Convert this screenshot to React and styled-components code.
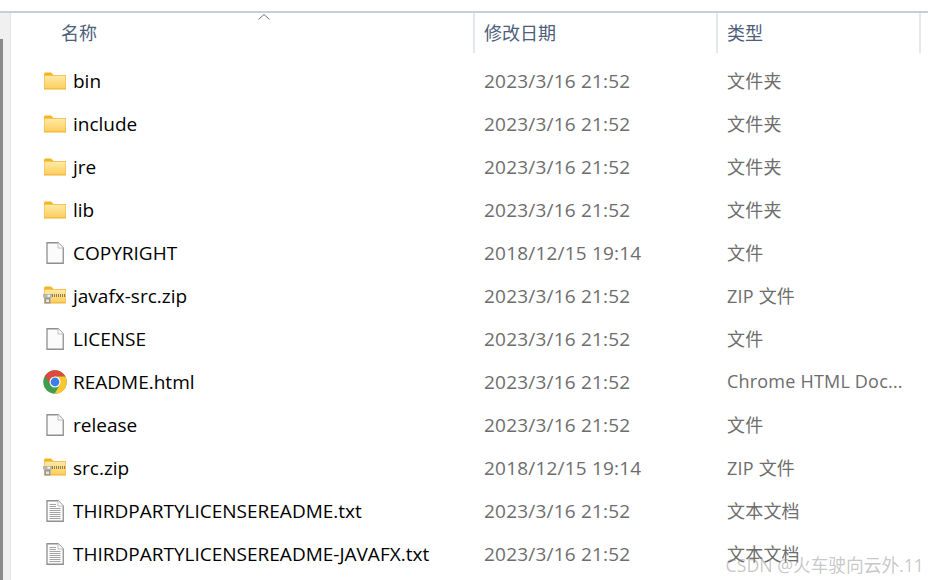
import React from "react";
import styled, { createGlobalStyle } from "styled-components";

const Global = createGlobalStyle`
  html, body {
    margin: 0;
    padding: 0;
    background: #fff;
    overflow: hidden;
  }
  body {
    font-family: "Open Sans", "Noto Sans CJK SC", sans-serif;
  }
`;

const Page = styled.div`
  position: relative;
  width: 928px;
  height: 580px;
  padding-top: 11px;
  box-sizing: border-box;
  overflow: hidden;
`;

const Frame = styled.div`
  display: flex;
  height: 569px;
  border-top: 2px solid #c4d0d9;
  box-sizing: border-box;
`;

const Side = styled.div`
  width: 10px;
  background: #f0f0f0;
  border-right: 1px solid #e4e4e4;
  margin-right: 2px;
`;

const SideThumb = styled.div`
  width: 3px;
  height: 100%;
  margin-top: 26px;
  background: #8a8a8a;
`;

const Main = styled.div`
  flex: 1;
  min-width: 0;
`;

const Head = styled.div`
  position: relative;
  display: grid;
  grid-template-columns: 462px 243px 203px;
  height: 39px;
`;

const HeadCell = styled.div`
  padding-left: ${(p) => p.$pad}px;
  border-right: 2px solid #e5e8eb;
  box-sizing: border-box;
  font-size: 18px;
  line-height: 40px;
  color: #4c607a;
`;

const SortCaret = styled.svg`
  position: absolute;
  left: 245px;
  top: 1px;
`;

const Rows = styled.div`
  padding-top: 7px;
`;

const Row = styled.div`
  display: grid;
  grid-template-columns: 462px 243px 203px;
  height: 43px;
  align-items: center;
`;

const NameCell = styled.div`
  display: flex;
  align-items: center;
  padding-left: 30px;
  font-size: 19px;
  color: #000;
  white-space: nowrap;
`;

const IconBox = styled.span`
  display: flex;
  justify-content: center;
  width: 24px;
  margin-right: 6px;
  flex: none;
`;

const DateCell = styled.div`
  padding-left: 9px;
  font-size: 19px;
  letter-spacing: 0.2px;
  color: #6d6d6d;
  white-space: nowrap;
`;

const TypeCell = styled.div`
  padding: 0 0 2px 9px;
  font-size: 18px;
  letter-spacing: 0.2px;
  color: #6d6d6d;
  white-space: nowrap;
`;

const Watermark = styled.div`
  position: absolute;
  right: 4px;
  bottom: 3px;
  font-size: 17.7px;
  color: rgba(130, 130, 130, 0.45);
  white-space: nowrap;
`;

function FolderBody({ id, x }) {
  return (
    <>
      <defs>
        <linearGradient id={id} x1="0" y1="0" x2="0" y2="1">
          <stop offset="0" stopColor="#ffeaa6" />
          <stop offset="1" stopColor="#fdcf5f" />
        </linearGradient>
      </defs>
      <path d={`M${x} 2 Q${x} .5 ${x + 1.5} .5 H${x + 7} L${x + 9.5} 3 H${x} Z`} fill="#f7b518" />
      <rect x={x} y="3" width="22" height="14.5" fill="#f1b338" />
      <rect x={x + 0.5} y="3.7" width="21" height="12.6" fill={`url(#${id})`} />
    </>
  );
}

function FolderIcon({ id }) {
  return (
    <svg width="22" height="18" viewBox="0 0 22 18">
      <FolderBody id={id} x={0} />
    </svg>
  );
}

function ZipIcon({ id }) {
  return (
    <svg width="24" height="20" viewBox="0 0 24 20">
      <FolderBody id={id} x={1} />
      <path d="M9 9.5 H23" stroke="#8d7d50" strokeWidth="3" strokeDasharray="1 1" />
      <rect x="0" y="8" width="9" height="3.5" fill="#b4b4b4" />
      <rect x="4.5" y="8.8" width="2.5" height="2" fill="#f4f4f4" />
      <rect x="1.5" y="11.5" width="6" height="6" fill="#989898" />
      <rect x="3" y="13.5" width="3" height="2.5" fill="#e6e6e6" />
    </svg>
  );
}

function FileIcon() {
  return (
    <svg width="18" height="22" viewBox="0 0 18 22">
      <path d="M1 .75 H12 L17.25 6 V21.25 H1 Z" fill="#fbfbfb" stroke="#8f8f8f" strokeWidth="1.3" />
      <path d="M12 .75 V6 H17.25" fill="#fff" stroke="#bdbdbd" strokeWidth="1" />
    </svg>
  );
}

function TextIcon() {
  return (
    <svg width="18" height="22" viewBox="0 0 18 22">
      <path d="M1 .75 H12 L17.25 6 V21.25 H1 Z" fill="#fbfbfb" stroke="#8f8f8f" strokeWidth="1.3" />
      <path d="M12 .75 V6 H17.25" fill="#fff" stroke="#bdbdbd" strokeWidth="1" />
      <path d="M3.5 4.5 H10 M3.5 6.5 H10 M3.5 8.5 H14.5 M3.5 10.5 H14.5 M3.5 12.5 H14.5 M3.5 14.5 H14.5 M3.5 16.5 H14.5 M3.5 18.5 H14.5" stroke="#a4a4a4" strokeWidth="1" />
    </svg>
  );
}

function ChromeIcon() {
  return (
    <svg width="24" height="24" viewBox="0 0 48 48">
      <circle cx="24" cy="24" r="23.5" fill="#3f9c50" />
      <path d="M44.75 13 A23.5 23.5 0 0 0 4.1 11.55 L14.5 29.5 L24 24 L24 13 Z" fill="#dc4a3d" />
      <path d="M44.75 13 A23.5 23.5 0 0 1 23.2 47.5 L33.5 29.5 L24 24 L24 13 Z" fill="#fbc62f" />
      <circle cx="24" cy="24" r="11" fill="#fff" />
      <circle cx="24" cy="24" r="8.8" fill="#3b7fe6" />
    </svg>
  );
}

function FileTypeIcon({ kind, id }) {
  if (kind === "folder") return <FolderIcon id={id} />;
  if (kind === "zip") return <ZipIcon id={id} />;
  if (kind === "text") return <TextIcon />;
  if (kind === "chrome") return <ChromeIcon />;
  return <FileIcon />;
}

const files = [
  ["bin", "folder", "2023/3/16 21:52", "文件夹"],
  ["include", "folder", "2023/3/16 21:52", "文件夹"],
  ["jre", "folder", "2023/3/16 21:52", "文件夹"],
  ["lib", "folder", "2023/3/16 21:52", "文件夹"],
  ["COPYRIGHT", "file", "2018/12/15 19:14", "文件"],
  ["javafx-src.zip", "zip", "2023/3/16 21:52", "ZIP 文件"],
  ["LICENSE", "file", "2023/3/16 21:52", "文件"],
  ["README.html", "chrome", "2023/3/16 21:52", "Chrome HTML Doc..."],
  ["release", "file", "2023/3/16 21:52", "文件"],
  ["src.zip", "zip", "2018/12/15 19:14", "ZIP 文件"],
  ["THIRDPARTYLICENSEREADME.txt", "text", "2023/3/16 21:52", "文本文档"],
  ["THIRDPARTYLICENSEREADME-JAVAFX.txt", "text", "2023/3/16 21:52", "文本文档"],
];

export default function App() {
  return (
    <Page>
      <Global />
      <Frame>
        <Side>
          <SideThumb />
        </Side>
        <Main>
          <Head>
            <HeadCell $pad={48}>名称</HeadCell>
            <HeadCell $pad={9}>修改日期</HeadCell>
            <HeadCell $pad={9}>类型</HeadCell>
            <SortCaret width="12" height="6" viewBox="0 0 12 6">
              <path d="M.5 5.5 L6 .5 L11.5 5.5" fill="none" stroke="#6f6f6f" />
            </SortCaret>
          </Head>
          <Rows>
            {files.map(([name, icon, date, type], i) => (
              <Row key={name}>
                <NameCell>
                  <IconBox>
                    <FileTypeIcon kind={icon} id={`folder-fill-${i}`} />
                  </IconBox>
                  {name}
                </NameCell>
                <DateCell>{date}</DateCell>
                <TypeCell>{type}</TypeCell>
              </Row>
            ))}
          </Rows>
        </Main>
      </Frame>
      <Watermark>CSDN @火车驶向云外.11</Watermark>
    </Page>
  );
}
